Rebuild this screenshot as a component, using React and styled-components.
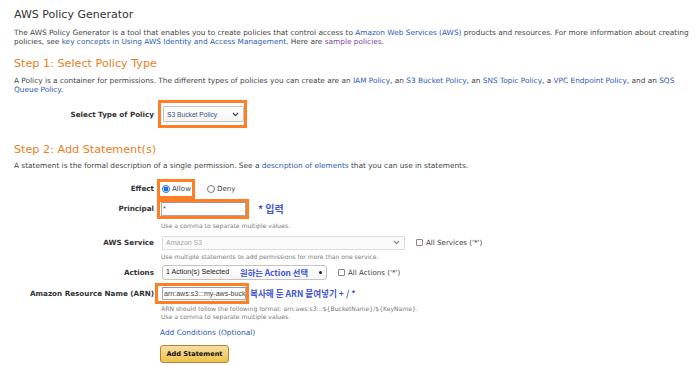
import React from "react";
import styled, { createGlobalStyle } from "styled-components";

const Global = createGlobalStyle`
  html, body { margin: 0; padding: 0; background: #fff; }
  body { font-family: "DejaVu Sans", Verdana, sans-serif; color: #444; }
  * { box-sizing: border-box; }
`;

const ORANGE = "#ff7f27";
const KBLUE = "#3f55d6";
const LINK = "#2d5bb0";

const Page = styled.div`
  padding: 8px 0 0 14px;
  width: 700px;
  height: 365px;
  overflow: hidden;
`;

const Title = styled.h1`
  margin: 0;
  font-weight: normal;
  font-size: 11px;
  line-height: 14px;
  color: #333;
`;

const Para = styled.p`
  margin: ${(p) => p.mt}px 0 0;
  font-size: 7.36px;
  line-height: 9px;
  color: #444;
  white-space: nowrap;
`;

const A = styled.a`
  color: ${(p) => (p.visited ? "#7b3f9e" : LINK)};
  text-decoration: none;
`;

const Step = styled.h2`
  margin: ${(p) => p.mt}px 0 0;
  font-weight: normal;
  font-size: 11.2px;
  line-height: 15px;
  color: #e8801e;
`;

const Form = styled.div`
  display: flex;
  flex-direction: column;
  margin-top: ${(p) => p.mt}px;
`;

const Row = styled.div`
  display: grid;
  grid-template-columns: 140px 1fr;
  column-gap: 6px;
  align-items: center;
  height: ${(p) => p.h}px;
  margin-top: ${(p) => p.mt || 0}px;
`;

const Label = styled.div`
  text-align: right;
  font-weight: bold;
  font-size: 7.2px;
  color: #333;
  white-space: nowrap;
`;

const Cell = styled.div`
  display: flex;
  align-items: center;
  height: 100%;
  margin-left: ${(p) => p.ml || 0}px;
`;

const Highlight = styled.div`
  display: flex;
  align-items: center;
  flex: none;
  border: 3px solid ${ORANGE};
  width: ${(p) => p.w}px;
  height: ${(p) => p.h}px;
  padding: ${(p) => p.pad || "0 1px"};
  margin-left: ${(p) => p.ml || 0}px;
  background: #fff;
  overflow: hidden;
`;

const SelectBox = styled.div`
  display: flex;
  align-items: center;
  justify-content: space-between;
  flex: none;
  width: ${(p) => p.w}px;
  height: ${(p) => p.h}px;
  padding: 0 4px 0 3px;
  border: 1px solid ${(p) => (p.disabled ? "#dcdcdc" : "#c4c4c4")};
  border-radius: ${(p) => (p.round ? 3 : 1)}px;
  background: ${(p) => (p.disabled ? "#fbfbfb" : "linear-gradient(#fff, #f6f6f6)")};
  font-family: "Liberation Sans", Arial, sans-serif;
  font-size: ${(p) => p.fs || 7}px;
  color: ${(p) => p.color};
  white-space: nowrap;
  position: relative;
`;

const Chevron = ({ color = "#555" }) => (
  <svg width="7" height="5" viewBox="0 0 7 5">
    <path d="M1 1 L3.5 3.6 L6 1" fill="none" stroke={color} strokeWidth="1.1" />
  </svg>
);

const Dot = styled.span`
  width: 3px;
  height: 3px;
  border-radius: 50%;
  background: #222;
`;

const Radio = styled.span`
  width: 8px;
  height: 8px;
  border-radius: 50%;
  border: 1px solid ${(p) => (p.on ? "#1a73e8" : "#777")};
  background: ${(p) => (p.on ? "radial-gradient(circle, #1a73e8 0 2.3px, #fff 2.6px)" : "#fff")};
  margin-right: 2px;
  flex: none;
`;

const Opt = styled.label`
  display: inline-flex;
  align-items: center;
  font-size: 7.1px;
  color: #444;
  white-space: nowrap;
  margin-left: ${(p) => p.ml || 0}px;
`;

const Check = styled.span`
  width: 7px;
  height: 7px;
  border: 1px solid #888;
  border-radius: 1px;
  margin-right: 3px;
  background: #fff;
  flex: none;
`;

const Input = styled.div`
  flex: none;
  width: ${(p) => p.w}px;
  height: ${(p) => p.h}px;
  border: 1px solid #aaa;
  border-top-color: #999;
  padding: 0 1px;
  display: flex;
  align-items: center;
  font-family: "Liberation Sans", Arial, sans-serif;
  font-size: 7.05px;
  color: #444;
  white-space: nowrap;
  overflow: hidden;
`;

const Note = styled.span`
  font-family: "Noto Sans CJK KR", "Noto Sans", sans-serif;
  font-weight: bold;
  color: ${KBLUE};
  font-size: ${(p) => p.fs}px;
  white-space: nowrap;
  margin-left: ${(p) => p.ml || 0}px;
`;

const OverNote = styled(Note)`
  position: absolute;
  left: ${(p) => p.left}px;
  top: 50%;
  transform: translateY(-52%);
`;

const Help = styled.div`
  font-size: 6.1px;
  line-height: 8px;
  color: #7a7a7a;
  white-space: nowrap;
  margin-left: 1px;
`;

const LinkLine = styled.a`
  font-size: 7.4px;
  line-height: 10px;
  color: ${LINK};
  text-decoration: none;
`;

const Button = styled.button`
  width: 69px;
  height: 18px;
  padding: 0;
  border: 1px solid #a88734;
  border-radius: 3px;
  background: linear-gradient(#f7dfa5, #f0c14b);
  font-family: "DejaVu Sans", Verdana, sans-serif;
  font-weight: bold;
  font-size: 6.6px;
  color: #111;
`;

export default function App() {
  return (
    <Page>
      <Global />
      <Title>AWS Policy Generator</Title>
      <Para mt={5.5}>
        The AWS Policy Generator is a tool that enables you to create policies that control access to{" "}
        <A href="#">Amazon Web Services (AWS)</A> products and resources. For more information about creating
        <br />
        policies, see <A href="#">key concepts in Using AWS Identity and Access Management</A>. Here are{" "}
        <A href="#" visited>sample policies</A>.
      </Para>

      <Step mt={10}>Step 1: Select Policy Type</Step>
      <Para mt={5}>
        A Policy is a container for permissions. The different types of policies you can create are an{" "}
        <A href="#">IAM Policy</A>, an <A href="#">S3 Bucket Policy</A>, an <A href="#">SNS Topic Policy</A>, a{" "}
        <A href="#">VPC Endpoint Policy</A>, and an <A href="#">SQS</A>
        <br />
        <A href="#">Queue Policy</A>.
      </Para>

      <Form mt={6.5}>
        <Row h={28}>
          <Label>Select Type of Policy</Label>
          <Cell ml={-2}>
            <Highlight w={89} h={28} pad="0 0 0 2px">
              <SelectBox w={81} h={16} fs={6.7} color="#3f5080">
                S3 Bucket Policy
                <Chevron color="#444" />
              </SelectBox>
            </Highlight>
          </Cell>
        </Row>
      </Form>

      <Step mt={13.5}>Step 2: Add Statement(s)</Step>
      <Para mt={4}>
        A statement is the formal description of a single permission. See a{" "}
        <A href="#">description of elements</A> that you can use in statements.
      </Para>

      <Form mt={9}>
        <Row h={20}>
          <Label>Effect</Label>
          <Cell ml={-3}>
            <Highlight w={38} h={20} pad="0 0 0 2px">
              <Opt>
                <Radio on />
                Allow
              </Opt>
            </Highlight>
            <Opt ml={12}>
              <Radio />
              Deny
            </Opt>
          </Cell>
        </Row>
        <Row h={20}>
          <Label>Principal</Label>
          <Cell ml={-3}>
            <Highlight w={92} h={20} pad="0 0 0 1px">
              <Input w={85} h={14}>*</Input>
            </Highlight>
            <Note fs={10} ml={9}>* 입력</Note>
          </Cell>
        </Row>
        <Row h={8} mt={3}>
          <span />
          <Help>Use a comma to separate multiple values.</Help>
        </Row>
        <Row h={14} mt={6}>
          <Label>AWS Service</Label>
          <Cell ml={2}>
            <SelectBox w={243} h={14} disabled color="#a8a8a8">
              Amazon S3
              <Chevron color="#888" />
            </SelectBox>
            <Opt ml={11}>
              <Check />
              All Services ('*')
            </Opt>
          </Cell>
        </Row>
        <Row h={8} mt={3}>
          <span />
          <Help>Use multiple statements to add permissions for more than one service.</Help>
        </Row>
        <Row h={15} mt={4}>
          <Label>Actions</Label>
          <Cell ml={2}>
            <SelectBox w={165} h={15} round fs={7.1} color="#222">
              1 Action(s) Selected
              <OverNote fs={8.3} left={77}>원하는 Action 선택</OverNote>
              <Dot />
            </SelectBox>
            <Opt ml={11}>
              <Check />
              All Actions ('*')
            </Opt>
          </Cell>
        </Row>
        <Row h={21} mt={3}>
          <Label>Amazon Resource Name (ARN)</Label>
          <Cell ml={-5}>
            <Highlight w={94} h={21} pad="0 0 0 4px">
              <Input w={84} h={13}>arn:aws:s3:::my-aws-buck</Input>
            </Highlight>
            <Note fs={8.6} ml={1}>복사해 둔 ARN 붙여넣기 + / *</Note>
          </Cell>
        </Row>
        <Row h={16} mt={1}>
          <span />
          <div>
            <Help>ARN should follow the following format: arn:aws:s3:::${"{BucketName}"}/${"{KeyName}"}.</Help>
            <Help>Use a comma to separate multiple values.</Help>
          </div>
        </Row>
        <Row h={10} mt={7}>
          <span />
          <Cell>
            <LinkLine href="#">Add Conditions (Optional)</LinkLine>
          </Cell>
        </Row>
        <Row h={18} mt={7}>
          <span />
          <Cell>
            <Button>Add Statement</Button>
          </Cell>
        </Row>
      </Form>
    </Page>
  );
}
